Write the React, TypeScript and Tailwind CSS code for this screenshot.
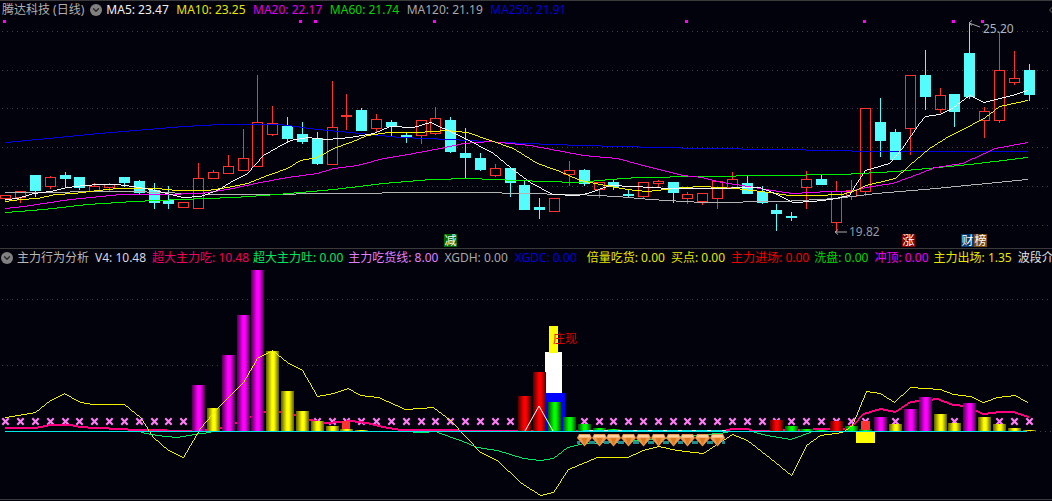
import React from 'react';
import { ChevronDown, ChevronLeft } from 'lucide-react';

// page coordinates: x of the candle / bar number i
const cx = (i: number) => Math.round(5.3 + 14.83 * i);

// top, bottom, high, low, up
type Candle = [number, number, number, number, boolean];
const candles: Candle[] = [
  [195, 198, 195, 202, true], [191, 197, 191, 203, true], [175, 191, 175, 197, false], [177, 186, 176, 189, true],
  [175, 179, 172, 187, false], [177, 188, 177, 190, false], [186, 191, 183, 191, true], [184, 187, 183, 191, true],
  [177, 183, 177, 187, false], [181, 193, 180, 194, false], [190, 203, 183, 209, false], [200, 204, 186, 209, false],
  [202, 207, 202, 207, true], [178, 208, 163, 208, true], [172, 178, 170, 179, true], [166, 173, 155, 174, true],
  [158, 170, 129, 170, true], [122, 166, 75, 166, true], [123, 134, 106, 136, true], [126, 139, 117, 143, false],
  [134, 142, 122, 144, false], [138, 164, 132, 165, false], [127, 164, 81, 164, true], [115, 116, 94, 130, true],
  [110, 131, 108, 131, false], [119, 128, 114, 132, true], [122, 127, 120, 136, false], [135, 137, 133, 143, false],
  [120, 135, 120, 144, true], [118, 133, 107, 135, true], [120, 152, 117, 153, false], [153, 158, 128, 178, false],
  [158, 170, 153, 171, false], [168, 175, 164, 177, true], [168, 183, 168, 197, false], [185, 210, 180, 210, false],
  [207, 210, 198, 219, false], [198, 211, 198, 212, true], [170, 174, 161, 186, true], [170, 184, 169, 186, false],
  [182, 189, 182, 198, true], [182, 187, 180, 190, false], [194, 196, 190, 197, false], [182, 196, 182, 198, true],
  [181, 183, 180, 187, true], [182, 193, 182, 203, false], [194, 198, 192, 204, true], [193, 201, 193, 205, true],
  [181, 198, 181, 209, true], [179, 187, 172, 188, true], [183, 194, 176, 194, false], [192, 203, 186, 204, false],
  [210, 214, 204, 231, false], [216, 218, 212, 221, false], [179, 187, 171, 209, true], [179, 185, 174, 185, false],
  [191, 222, 181, 232, true], [190, 196, 180, 200, true], [108, 191, 108, 196, true], [122, 141, 98, 157, false],
  [132, 160, 129, 160, false], [75, 128, 75, 155, true], [75, 97, 50, 110, false], [95, 109, 88, 113, true],
  [94, 112, 94, 127, false], [53, 97, 22, 99, false], [111, 120, 107, 138, true], [70, 120, 32, 123, true],
  [78, 82, 51, 85, true], [70, 95, 64, 101, false],
];

const ma5 = '5,199 17,198 33,193 50,191 67,187 83,185 100,184 117,184 133,186 150,189 167,193 183,197 200,196 217,190 233,180 247,173 263,155 277,147 290,140 307,137 327,139 350,137 373,133 390,126 413,127 430,122 443,128 463,137 493,153 510,167 530,182 552,194 577,195 587,193 610,185 633,186 670,188 702,188 759,187 775,193 792,202 812,201 830,199 849,195 855,185 865,170 889,163 902,148 919,123 925,116 939,114 952,108 969,95 984,102 995,99 1012,95 1027,90';
const ma10 = '5,201 20,199 37,198 55,194 73,193 97,190 117,188 157,188 177,190 207,190 227,187 247,183 267,175 287,168 300,160 317,157 333,148 350,142 367,135 388,132 417,132 447,130 467,132 490,140 513,148 537,163 557,170 580,180 600,184 627,189 647,191 683,187 702,186 735,188 769,192 789,195 812,195 842,194 855,190 865,185 895,178 909,165 929,148 945,138 972,124 985,117 999,106 1027,100';
const ma20 = '5,208 23,206 43,203 70,199 100,196 120,194 160,194 200,193 227,189 260,182 287,177 317,173 333,168 357,165 383,158 413,153 440,148 463,143 490,141 530,145 583,155 617,158 650,167 683,175 702,177 722,182 742,185 765,189 792,193 829,191 849,191 865,187 892,183 909,177 935,167 962,163 995,148 1027,142';
const ma60 = '5,212 43,209 87,204 133,201 180,199 233,197 277,194 333,189 350,187 383,183 430,179 470,178 517,180 577,182 610,179 637,177 702,176 769,175 842,174 895,171 969,164 1027,157';
const ma120 = '5,192 133,191 160,192 220,194 267,194 323,193 350,193 413,192 487,192 517,193 577,194 617,196 650,199 702,202 782,201 835,198 875,193 935,188 1027,179';
const ma250 = '5,142 37,139 67,136 110,132 147,129 183,126 220,124 280,124 317,129 350,132 400,137 450,139 503,142 550,144 617,146 702,148 782,149 875,151 1027,151';

const pinkLine = '5,428 35,428 50,425 70,425 80,427 95,428 123,429 133,430 200,431 220,428 235,423 250,417 265,412 280,412 295,415 310,420 325,423 340,422 350,421 367,423 383,427 400,430 517,431 723,431 732,429 747,429 753,431 810,430 815,429 830,429 843,429 853,425 863,414 880,409 895,412 910,402 937,399 953,405 967,406 983,414 1000,412 1013,412 1028,417';
const yellowLine = '5,417 35,412 50,400 64,393 80,402 93,404 124,404 140,417 153,437 168,450 183,457 200,428 217,408 243,382 257,358 272,350 287,362 302,370 317,396 333,393 348,388 360,395 378,397 405,409 433,407 450,420 480,452 497,460 520,482 540,495 553,492 568,469 597,457 627,457 643,450 658,446 677,450 703,453 732,434 747,440 770,458 791,475 806,445 820,435 842,432 852,425 866,391 880,393 894,402 910,387 940,389 953,394 970,396 983,402 997,397 1015,395 1027,402';
const greenSegments = [
  '141,432 157,435 177,437 200,433 210,432',
  '413,432 428,432',
  '437,432 460,440 477,447 497,450 523,458 540,460 553,458 567,447 583,443 617,442 717,433 727,432',
  '754,432 767,435 790,439 810,432',
];

// turns "x,y x,y" into single pixels, the way the chart draws its lines
const toPixels = (points: string, offset: number) => {
  const pts = points.split(' ').map((p) => p.split(',').map(Number));
  let d = '';
  for (let k = 1; k < pts.length; k++) {
    const [x0, y0] = pts[k - 1];
    const [x1, y1] = pts[k];
    const steps = Math.max(Math.abs(x1 - x0), Math.abs(y1 - y0));
    for (let s = 0; s <= steps; s++) {
      const x = Math.round(x0 + ((x1 - x0) * s) / steps);
      const y = Math.round(y0 + ((y1 - y0) * s) / steps);
      d += `M${x} ${y + offset}h1`;
    }
  }
  return d;
};

// bar number, top, colour
const bars: [number, number, string][] = [
  [13, 385, 'm'], [14, 408, 'y'], [15, 355, 'm'], [16, 315, 'm'], [17, 270, 'm'], [18, 351, 'y'], [19, 391, 'y'],
  [20, 411, 'y'], [21, 421, 'y'], [22, 426, 'y'], [23, 429, 'y'], [24, 430, 'y'], [35, 396, 'r'], [36, 372, 'r'],
  [37, 402, 'g'], [38, 417, 'g'], [39, 424, 'g'], [40, 428, 'g'], [41, 429, 'g'], [52, 420, 'r'], [53, 426, 'g'],
  [54, 429, 'g'], [55, 430, 'g'], [56, 421, 'r'], [57, 426, 'g'], [58, 429, 'g'], [59, 417, 'm'], [60, 424, 'y'],
  [61, 409, 'm'], [62, 397, 'm'], [63, 414, 'y'], [64, 423, 'y'], [65, 403, 'm'], [66, 417, 'y'], [67, 424, 'y'],
  [68, 428, 'y'], [69, 430, 'y'],
];
const gradientIds: Record<string, string> = { m: 'url(#barM)', y: 'url(#barY)', r: 'url(#barR)', g: 'url(#barG)' };

const crosses = [
  0, 1, 2, 3, 4, 5, 6, 7, 8, 9, 10, 11, 12, 21, 22, 23, 24, 25, 26, 27, 28, 29, 30, 31, 32, 33, 34, 39, 40, 41, 42,
  43, 44, 45, 46, 47, 48, 49, 50, 51, 52, 53, 54, 55, 56, 57, 58, 60, 64, 67, 68, 69,
];
const diamonds = [39, 40, 41, 42, 43, 44, 45, 46, 47, 48];
const marks = [4, 300, 315, 434, 686, 864, 953, 982];

const topLegend = [
  { t: 'MA5: 23.47', c: 'text-[#f0f0f0]' },
  { t: 'MA10: 23.25', c: 'text-[#e6e600]' },
  { t: 'MA20: 22.17', c: 'text-[#e000e6]' },
  { t: 'MA60: 21.74', c: 'text-[#00d800]' },
  { t: 'MA120: 21.19', c: 'text-[#a8a8a8]' },
  { t: 'MA250: 21.91', c: 'text-[#0000d8]' },
];

const lowerLegend = [
  { t: 'V4: 10.48', c: 'text-[#d8d8e0]' },
  { t: '超大主力吃: 10.48', c: 'text-[#f00060]' },
  { t: '超大主力吐: 0.00', c: 'ml-[-2px] text-[#00e860]' },
  { t: '主力吃货线: 8.00', c: 'ml-[-1px] text-[#e080ff]' },
  { t: 'XGDH: 0.00', c: 'text-[#a8a8a8]' },
  { t: 'XGDC: 0.00', c: 'ml-[1px] mr-[3px] text-[#0000d8]' },
  { t: '倍量吃货: 0.00', c: 'ml-[1px] text-[#e6e600]' },
  { t: '买点: 0.00', c: 'text-[#e6e600]' },
  { t: '主力进场: 0.00', c: 'text-[#f00000]' },
  { t: '洗盘: 0.00', c: 'ml-[-1px] text-[#00d800]' },
  { t: '冲顶: 0.00', c: 'text-[#f000f0]' },
  { t: '主力出场: 1.35', c: 'ml-[-1px] text-[#e6e600]' },
  { t: '波段介入', c: 'text-[#e0e0e0]' },
];

const Toggle: React.FC<{ className: string }> = ({ className }) => (
  <span className={`flex h-3 w-3 shrink-0 items-center justify-center rounded-full bg-[#808080] ${className}`}>
    <ChevronDown size={10} strokeWidth={3} className="text-[#222222]" />
  </span>
);

const Grid: React.FC<{ rows: number[] }> = ({ rows }) => (
  <>
    {rows.map((y) => (
      <line key={y} x1={2} x2={1052} y1={y + 0.5} y2={y + 0.5} stroke="#404040" strokeDasharray="1 4" />
    ))}
  </>
);

const Line: React.FC<{ points: string; color: string; width?: number }> = ({ points, color, width = 1 }) => (
  <path d={toPixels(points, width === 1 ? 0.5 : 0)} fill="none" stroke={color} strokeWidth={width} />
);

const CandleChart: React.FC = () => (
  <svg viewBox="0 19 1052 229" width={1052} height={229} className="block" shapeRendering="crispEdges">
    <Grid rows={[31, 70, 108, 147, 186, 225]} />
    {marks.map((x) => (
      <rect key={x} x={x - 1} y={20} width={3} height={3} fill="#ff00ff" />
    ))}
    {candles.map(([top, bottom, high, low, up], i) => {
      const x = cx(i);
      const color = up ? '#ff3232' : '#54fcfc';
      return (
        <g key={i}>
          <line x1={x + 0.5} x2={x + 0.5} y1={high} y2={top} stroke={color} />
          <line x1={x + 0.5} x2={x + 0.5} y1={bottom} y2={low} stroke={color} />
          {up ? (
            <rect x={x - 4.5} y={top + 0.5} width={10} height={bottom - top} fill="none" stroke={color} />
          ) : (
            <rect x={x - 5} y={top} width={11} height={bottom - top} fill={color} />
          )}
        </g>
      );
    })}
    <Line points={ma250} color="#0000e0" />
    <Line points={ma120} color="#b4b4b4" />
    <Line points={ma60} color="#00f000" />
    <Line points={ma20} color="#f000f0" />
    <Line points={ma10} color="#f0f000" />
    <Line points={ma5} color="#f4f4f4" />
    <g shapeRendering="auto" stroke="#a8a8a8" fill="none">
      <polyline points="972,20.5 969,23 972,25.5" />
      <line x1={969} y1={23} x2={980} y2={27} />
      <polyline points="838,229.5 835,232 838,234.5" />
      <line x1={835} y1={232} x2={847} y2={232} />
    </g>
  </svg>
);

const Diamond: React.FC<{ x: number }> = ({ x }) => {
  const c = x + 0.5;
  return (
    <g shapeRendering="auto">
      <rect x={c - 7.5} y={441} width={3} height={3} fill="#1f8f96" />
      <rect x={c + 4.5} y={441} width={3} height={3} fill="#1f8f96" />
      <polygon points={`${c - 5.5},434 ${c + 5.5},434 ${c + 7.5},438 ${c},446.5 ${c - 7.5},438`} fill="#ee9a4c" />
      <polygon points={`${c - 5},435 ${c + 5},435 ${c + 6},437.5 ${c - 6},437.5`} fill="#ffd2a0" />
      <polygon points={`${c - 3},438 ${c + 3},438 ${c},445.5`} fill="#dd7a22" />
    </g>
  );
};

const BehaviorChart: React.FC = () => (
  <svg viewBox="0 266 1052 233" width={1052} height={233} className="block" shapeRendering="crispEdges">
    <defs>
      <linearGradient id="barM">
        <stop offset="0" stopColor="#500050" />
        <stop offset="0.45" stopColor="#ff00ff" />
        <stop offset="0.62" stopColor="#ff00ff" />
        <stop offset="1" stopColor="#500050" />
      </linearGradient>
      <linearGradient id="barY">
        <stop offset="0" stopColor="#5a5a00" />
        <stop offset="0.45" stopColor="#ffff00" />
        <stop offset="0.62" stopColor="#ffff00" />
        <stop offset="1" stopColor="#5a5a00" />
      </linearGradient>
      <linearGradient id="barR">
        <stop offset="0" stopColor="#500000" />
        <stop offset="0.45" stopColor="#ff0000" />
        <stop offset="0.62" stopColor="#ff0000" />
        <stop offset="1" stopColor="#500000" />
      </linearGradient>
      <linearGradient id="barG">
        <stop offset="0" stopColor="#005000" />
        <stop offset="0.45" stopColor="#00ff00" />
        <stop offset="0.62" stopColor="#00ff00" />
        <stop offset="1" stopColor="#005000" />
      </linearGradient>
    </defs>
    <Grid rows={[299, 365]} />
    <line x1={1030} x2={1052} y1={431.5} y2={431.5} stroke="#404040" strokeDasharray="1 4" />
    {crosses.map((i) => {
      const x = cx(i) + 0.5;
      return (
        <path
          key={i}
          d={`M${x - 3.2} 418.3 L${x + 3.2} 424.7 M${x + 3.2} 418.3 L${x - 3.2} 424.7`}
          stroke="#ff7cf4"
          strokeWidth={2.2}
          shapeRendering="auto"
        />
      );
    })}
    <Line points={pinkLine} color="#ff0080" width={2} />
    <rect x={545} y={393} width={20} height={38} fill="#0000ff" />
    <rect x={545} y={352} width={17} height={41} fill="#ffffff" />
    <rect x={549} y={326} width={9} height={27} fill="#ffff00" />
    {bars.map(([i, top, kind]) => (
      <rect key={i} x={cx(i) - 6} y={top} width={13} height={431 - top} fill={gradientIds[kind]} />
    ))}
    <rect x={342} y={421} width={8} height={8} fill="#ff3232" />
    <rect x={861} y={421} width={9} height={9} fill="#ff3232" />
    <rect x={856} y={432} width={19} height={11} fill="#ffff00" />
    <polyline points="525,431 539,406 553,431" fill="none" stroke="#ffffff" shapeRendering="auto" />
    {greenSegments.map((p) => (
      <Line key={p} points={p} color="#00e868" />
    ))}
    <Line points={yellowLine} color="#f0f000" />
    <line x1={5} x2={1027} y1={431.5} y2={431.5} stroke="#00e8e8" />
    <rect x={583} y={430} width={140} height={1} fill="#00e8e8" />
    {diamonds.map((i) => (
      <rect key={i} x={cx(i) + 5} y={430} width={4} height={1} fill="#e8e8d0" />
    ))}
    {diamonds.map((i) => (
      <Diamond key={i} x={cx(i)} />
    ))}
  </svg>
);

const badge = 'absolute top-[215px] flex h-[13px] w-[13px] items-center justify-center text-white';

export default function App() {
  return (
    <div
      className="flex h-[501px] w-[1052px] flex-col overflow-hidden bg-[#02020c] text-[12px] leading-none whitespace-nowrap"
      style={{ fontFamily: '"Noto Sans", "Noto Sans CJK SC", sans-serif' }}
    >
      <div className="h-px shrink-0 bg-[#3a3a3a]" />

      <div className="relative flex h-[18px] shrink-0 items-center gap-[7.5px] pl-[2px]">
        <span className="text-[#b0b0b0]">腾达科技 (日线)</span>
        <Toggle className="ml-[-1.5px] mr-[-3.5px]" />
        {topLegend.map((item) => (
          <span key={item.t} className={item.c}>
            {item.t}
          </span>
        ))}
        <ChevronLeft size={12} className="absolute right-[-5px] top-[3px] text-[#666666]" />
      </div>

      <div className="relative h-[229px] shrink-0">
        <CandleChart />
        <span className="absolute left-[983px] top-[4px] text-[#a8b4c0]">25.20</span>
        <span className="absolute left-[849px] top-[207px] text-[#909aa4]">19.82</span>
        <span className={`${badge} left-[444px] bg-[#006a00]`}>减</span>
        <span className={`${badge} left-[902px] bg-[#800000]`}>涨</span>
        <span className={`${badge} left-[961px] bg-[#003a70]`}>财</span>
        <span className={`${badge} left-[974px] bg-[#7a4a10]`}>榜</span>
      </div>

      <div className="h-px shrink-0 bg-[#3a3a3a]" />

      <div className="flex h-[17px] shrink-0 items-center gap-[6px] overflow-hidden pl-[1px]">
        <Toggle className="mr-[-2px]" />
        <span className="text-[#b8b8b8]">主力行为分析</span>
        {lowerLegend.map((item) => (
          <span key={item.t} className={item.c}>
            {item.t}
          </span>
        ))}
      </div>

      <div className="relative h-[233px] shrink-0">
        <BehaviorChart />
        <span className="absolute left-[553px] top-[67px] text-[#d80000]">庄现</span>
      </div>

      <div className="h-px shrink-0 bg-[#3a3a3a]" />
    </div>
  );
}
